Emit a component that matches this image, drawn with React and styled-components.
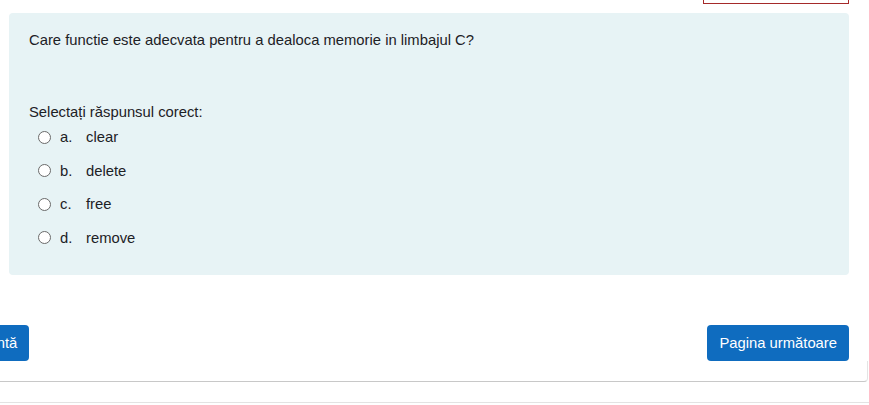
import styled, { createGlobalStyle } from "styled-components";

const GlobalStyle = createGlobalStyle`
  body {
    margin: 0;
    background: #fff;
    font-family: "Liberation Sans", Arial, sans-serif;
    color: #1d2125;
  }
`;

const Page = styled.div`
  width: 869px;
  height: 405px;
  overflow: hidden;
  position: relative;
`;

const TopRow = styled.div`
  display: flex;
  justify-content: flex-end;
  padding-right: 20px;
  height: 13px;
`;

const FlagBox = styled.div`
  width: 144px;
  height: 3px;
  border: 1px solid #a52a2a;
  border-top: none;
`;

const Panel = styled.div`
  margin: 0 20px 0 9px;
  height: 262px;
  box-sizing: border-box;
  padding: 16px 20px 0 20px;
  background: #e7f3f5;
  border-radius: 4px;
`;

const QuestionText = styled.p`
  margin: 0;
  font-size: 14.8px;
  line-height: 22px;
`;

const Prompt = styled.p`
  margin: 50px 0 0 0;
  font-size: 14.8px;
  line-height: 22px;
`;

const Options = styled.div`
  display: flex;
  flex-direction: column;
  gap: 11.5px;
  margin-top: 3px;
  padding-left: 9px;
`;

const Option = styled.label`
  display: flex;
  align-items: center;
  height: 22px;
  font-size: 14.8px;
`;

const Radio = styled.span`
  width: 11px;
  height: 11px;
  border: 1px solid #6a6a6a;
  border-radius: 50%;
  background: #fff;
  margin-right: 9px;
`;

const Letter = styled.span`
  width: 26px;
`;

const Nav = styled.div`
  display: flex;
  justify-content: space-between;
  align-items: center;
  margin-top: 50px;
  padding-right: 20px;
`;

const Button = styled.button`
  height: 36px;
  padding: 0 12px;
  border: none;
  border-radius: 4px;
  background: #0f6cbf;
  color: #fff;
  font-family: "Liberation Sans", Arial, sans-serif;
  font-size: 14.8px;
  white-space: nowrap;
  cursor: pointer;
  margin-left: ${(p) => (p.$cut ? "-119px" : "0")};
`;

const Divider = styled.div`
  height: 20px;
  margin-right: 1px;
  border-bottom: 1px solid #c8c8c8;
  border-right: 1px solid #e4e4e4;
  border-bottom-right-radius: 4px;
`;

const Footer = styled.div`
  margin-top: 20px;
  border-top: 1px solid #e3e3e3;
`;

const options = [
  ["a.", "clear"],
  ["b.", "delete"],
  ["c.", "free"],
  ["d.", "remove"],
];

export default function App() {
  return (
    <Page>
      <GlobalStyle />
      <TopRow>
        <FlagBox />
      </TopRow>
      <Panel>
        <QuestionText>
          Care functie este adecvata pentru a dealoca memorie in limbajul C?
        </QuestionText>
        <Prompt>Selectați răspunsul corect:</Prompt>
        <Options>
          {options.map(([l, t]) => (
            <Option key={l}>
              <Radio />
              <Letter>{l}</Letter>
              {t}
            </Option>
          ))}
        </Options>
      </Panel>
      <Nav>
        <Button $cut>Pagina precedentă</Button>
        <Button>Pagina următoare</Button>
      </Nav>
      <Divider />
      <Footer />
    </Page>
  );
}
